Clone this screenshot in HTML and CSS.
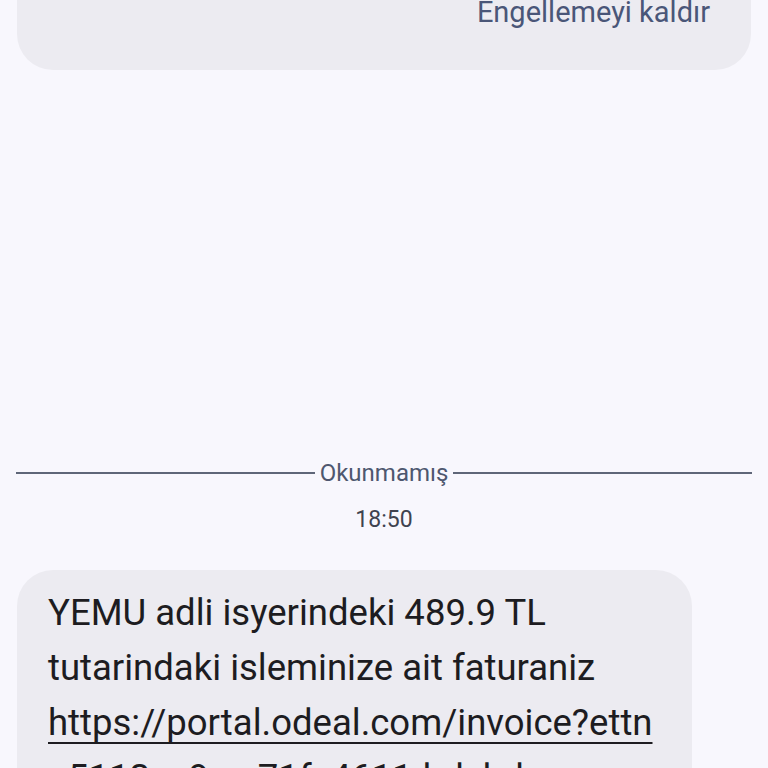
FILE: index.html
```html
<!DOCTYPE html>
<html lang="tr">
<head>
<meta charset="utf-8">
<link rel="stylesheet" href="styles.css">
</head>
<body>
<div class="screen">
  <div class="blocked-card">
    <span class="unblock">Engellemeyi kaldır</span>
  </div>
  <div class="spacer"></div>
  <div class="divider">
    <span class="line"></span>
    <span class="divider-label">Okunmamış</span>
    <span class="line"></span>
  </div>
  <div class="time">18:50</div>
  <div class="bubble">
    <p class="msg">YEMU adli isyerindeki 489.9 TL tutarindaki isleminize ait faturaniz <span class="link nowrap">https://portal.odeal.com/invoice?ettn</span> <span class="link">=5112ec9ee-71fe4611-bdcbdc</span></p>
  </div>
</div>
</body>
</html>
```

FILE: styles.css
```css
html, body {
  margin: 0;
  padding: 0;
  background: #f8f7fd;
  overflow: hidden;
}
.screen {
  width: 768px;
  height: 768px;
  overflow: hidden;
  display: flex;
  flex-direction: column;
  font-family: Roboto, "Noto Sans", sans-serif;
}
.blocked-card {
  margin: -40px 17px 0 17px;
  height: 110px;
  background: #ecebf1;
  border-radius: 0 0 36px 36px;
  display: flex;
  justify-content: flex-end;
  align-items: flex-start;
  padding: 35px 41px 0 0;
  box-sizing: border-box;
  flex-shrink: 0;
}
.unblock {
  font-size: 29px;
  color: #4a5678;
  line-height: 34px;
}
.spacer {
  height: 390px;
  flex-shrink: 0;
}
.divider {
  display: flex;
  align-items: center;
  margin: 0 16px 0 16px;
  gap: 5px;
  height: 26px;
  flex-shrink: 0;
}
.line {
  flex: 1;
  height: 2px;
  background: #5f6678;
}
.divider-label {
  font-size: 24px;
  color: #4e576f;
  line-height: 26px;
}
.time {
  text-align: center;
  font-size: 23px;
  color: #3f4350;
  margin-top: 20px;
  line-height: 28px;
  flex-shrink: 0;
}
.bubble {
  margin: 36px 0 0 17px;
  width: 675px;
  background: #ecebf1;
  border-radius: 36px;
  padding: 15px 22px 20px 31px;
  box-sizing: border-box;
  flex-shrink: 0;
}
.msg {
  margin: 0;
  font-size: 36.5px;
  line-height: 55px;
  color: #1d1c21;
}
.link {
  text-decoration: underline;
  text-decoration-thickness: 2px;
  text-underline-offset: 7px;
}
.nowrap {
  white-space: nowrap;
}
```
